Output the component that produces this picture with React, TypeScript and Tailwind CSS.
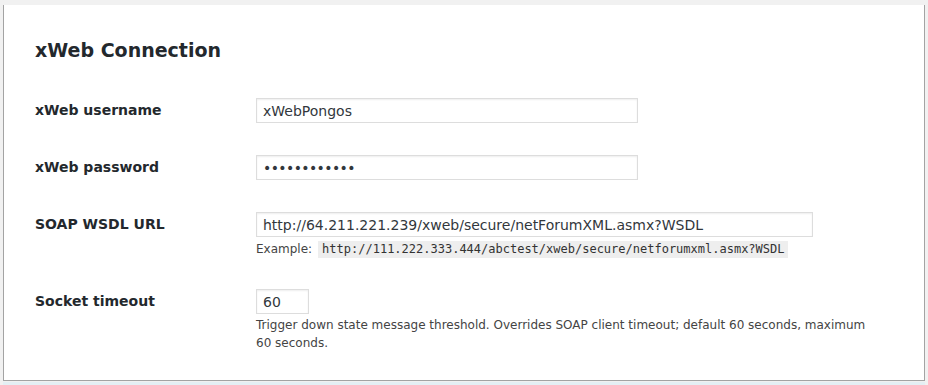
import React from "react";

const FONT = "font-['DejaVu_Sans',Verdana,sans-serif]";

function Row({ label, children }: { label: string; children: React.ReactNode }) {
  return (
    <div className="flex items-start py-4">
      <div className="w-[221px] shrink-0 text-[14px] font-bold leading-[25px] text-[#23282d]">{label}</div>
      <div className="flex flex-col">{children}</div>
    </div>
  );
}

const inputCls =
  "h-[25px] border border-[#dddddd] bg-white px-[6px] text-[14px] leading-[23px] text-[#32373c] shadow-[inset_0_1px_2px_rgba(0,0,0,0.07)] outline-none";

export default function App() {
  return (
    <div className={`h-[385px] w-[928px] bg-[#f1f1f1] pt-[5px] ${FONT}`}>
      <div className="mx-[3px] h-[376px] border-x border-b border-[#a3a3a3] bg-white pl-[31px] pt-[33px]">
        <h2 className="text-[19px] font-bold leading-[24px] text-[#23282d]">xWeb Connection</h2>

        <div className="mt-[20px]">
          <Row label="xWeb username">
            <input className={`${inputCls} w-[382px]`} defaultValue="xWebPongos" readOnly />
          </Row>
          <Row label="xWeb password">
            <input
              type="password"
              className={`${inputCls} w-[382px] tracking-[-0.6px]`}
              defaultValue="abcdefghijkl"
              readOnly
            />
          </Row>
          <Row label="SOAP WSDL URL">
            <input
              className={`${inputCls} w-[557px]`}
              defaultValue="http://64.211.221.239/xweb/secure/netForumXML.asmx?WSDL"
              readOnly
            />
            <p className="mt-[4px] flex h-[16px] items-center text-[12px] text-[#444]">
              Example:
              <code className="ml-[6px] bg-[#eeeeee] px-[4px] font-['DejaVu_Sans_Mono',monospace] text-[12px] leading-[17px] text-[#333]">
                http://111.222.333.444/abctest/xweb/secure/netforumxml.asmx?WSDL
              </code>
            </p>
          </Row>
          <Row label="Socket timeout">
            <input className={`${inputCls} w-[53px]`} defaultValue="60" readOnly />
            <p className="mt-[2px] w-[620px] text-[12px] leading-[18px] text-[#444]">
              Trigger down state message threshold. Overrides SOAP client timeout; default 60 seconds, maximum 60
              seconds.
            </p>
          </Row>
        </div>
      </div>
      <div className="mx-[3px] mt-[1px] h-[3px] bg-[#e4eff4]" />
    </div>
  );
}
